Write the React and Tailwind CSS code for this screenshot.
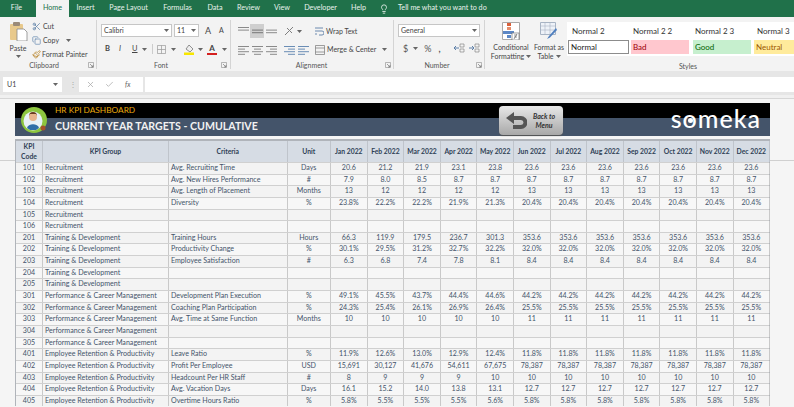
import { Check, Copy, Lightbulb, Paintbrush, Scissors, X } from "lucide-react";

const tabs = [
  ["File", "w-[33px] mr-[3px]"],
  ["Home", "w-[33px]"],
  ["Insert", "w-[33px]"],
  ["Page Layout", "w-[53px]"],
  ["Formulas", "w-[45px]"],
  ["Data", "w-[30px]"],
  ["Review", "w-[37px]"],
  ["View", "w-[30px]"],
  ["Developer", "w-[47px]"],
  ["Help", "w-[29px]"],
];

const months = ["Jan", "Feb", "Mar", "Apr", "May", "Jun", "Jul", "Aug", "Sep", "Oct", "Nov", "Dec"];

const R = "Recruitment";
const T = "Training & Development";
const P = "Performance & Career Management";
const E = "Employee Retention & Productivity";

// first six months are given, the rest of the year repeats June
const rows = [
  [101, R, "Avg. Recruiting Time", "Days", ["20.6", "21.2", "21.9", "23.1", "23.8", "23.6"]],
  [102, R, "Avg. New Hires Performance", "#", ["7.9", "8.0", "8.5", "8.7", "8.7", "8.7"]],
  [103, R, "Avg. Length of Placement", "Months", ["13", "12", "12", "12", "12", "13"]],
  [104, R, "Diversity", "%", ["23.8%", "22.2%", "22.2%", "21.9%", "21.3%", "20.4%"]],
  [105, R],
  [106, R],
  [201, T, "Training Hours", "Hours", ["66.3", "119.9", "179.5", "236.7", "301.3", "353.6"]],
  [202, T, "Productivity Change", "%", ["30.1%", "29.5%", "31.2%", "32.7%", "32.2%", "32.0%"]],
  [203, T, "Employee Satisfaction", "#", ["6.3", "6.8", "7.4", "7.8", "8.1", "8.4"]],
  [204, T],
  [205, T],
  [301, P, "Development Plan Execution", "%", ["49.1%", "45.5%", "43.7%", "44.4%", "44.6%", "44.2%"]],
  [302, P, "Coaching Plan Participation", "%", ["24.3%", "25.4%", "26.1%", "26.9%", "26.4%", "25.5%"]],
  [303, P, "Avg. Time at Same Function", "Months", ["10", "10", "10", "10", "10", "11"]],
  [304, P],
  [305, P],
  [401, E, "Leave Ratio", "%", ["11.9%", "12.6%", "13.0%", "12.9%", "12.4%", "11.8%"]],
  [402, E, "Profit Per Employee", "USD", ["15,691", "30,127", "41,676", "54,611", "67,675", "78,387"]],
  [403, E, "Headcount Per HR Staff", "#", ["8", "9", "9", "9", "10", "10"]],
  [404, E, "Avg. Vacation Days", "Days", ["16.1", "15.2", "14.0", "13.8", "13.1", "12.7"]],
  [405, E, "Overtime Hours Ratio", "%", ["5.8%", "5.5%", "5.5%", "5.5%", "5.6%", "5.8%"]],
];

const gridCols = "grid grid-cols-[27px_126px_118.5px_43.5px_repeat(12,36.6px)]";

function Caret({ className = "" }) {
  return (
    <svg width="5" height="3" viewBox="0 0 5 3" className={className}>
      <path d="M0 0h5L2.5 3z" fill="#666" />
    </svg>
  );
}

function Lines({ widths, color = "#8a8a8a", align = "left" }) {
  return (
    <svg width="11" height="10" viewBox="0 0 11 10">
      {widths.map((w, i) => (
        <rect
          key={i}
          x={align === "left" ? 0 : align === "right" ? 11 - w : (11 - w) / 2}
          y={1 + i * 2.6}
          width={w}
          height="1"
          fill={color}
        />
      ))}
    </svg>
  );
}

function Launcher() {
  return (
    <svg width="6" height="6" viewBox="0 0 6 6" className="self-center">
      <path d="M.5.5h5v5h-5z" fill="none" stroke="#999" strokeWidth=".7" />
      <path d="M2 2l3 3M3 5h2V3" fill="none" stroke="#777" strokeWidth=".7" />
    </svg>
  );
}

function GroupLabel({ children }) {
  return (
    <div className="flex h-[12px] items-center whitespace-nowrap text-[7px] text-[#555]">
      <span className="flex-1 text-center">{children}</span>
      <Launcher />
    </div>
  );
}

function Combo({ width, children }) {
  return (
    <div className={`flex h-[13px] items-center justify-between border border-[#c6c6c6] bg-white px-[2px] text-[7px] text-[#444] ${width}`}>
      <span>{children}</span>
      <Caret />
    </div>
  );
}

function Sep() {
  return <div className="mt-[3px] h-[49px] w-px bg-[#d4d4d4]" />;
}

function ClipboardGroup() {
  return (
    <div className="flex w-[96px] flex-col pr-[2px]">
      <div className="flex h-[44px] pl-[7px]">
        <div className="flex w-[22px] flex-col items-center pt-[5px]">
          <svg width="19" height="19" viewBox="0 0 19 19">
            <rect x="1" y="2" width="13" height="16" rx="1" fill="#e8c98c" />
            <rect x="4" y="0" width="7" height="4" rx="1" fill="#9a8a78" />
            <path d="M8 7h7l3 3v9H8z" fill="#fff" stroke="#888" strokeWidth=".8" />
          </svg>
          <span className="mt-[2px] text-[7px] leading-[10px] text-[#444]">Paste</span>
          <Caret className="mt-[2px]" />
        </div>
        <div className="ml-[3px] flex flex-col gap-[4px] pt-[4px] text-[7px] leading-[10px] text-[#444]">
          <div className="flex items-center gap-[2px]">
            <Scissors size={9} color="#5b7fa6" />
            <span>Cut</span>
          </div>
          <div className="flex items-center gap-[2px]">
            <Copy size={9} color="#6d8fb3" />
            <span>Copy</span>
            <Caret className="ml-[5px]" />
          </div>
          <div className="flex items-center gap-[1px]">
            <Paintbrush size={9} color="#b8862c" />
            <span className="whitespace-nowrap">Format Painter</span>
          </div>
        </div>
      </div>
      <GroupLabel>Clipboard</GroupLabel>
    </div>
  );
}

function FontGroup() {
  return (
    <div className="flex w-[133px] flex-col pl-[4px] pr-[3px]">
      <div className="h-[44px] pt-[7px]">
        <div className="flex items-center gap-[2px]">
          <Combo width="w-[71px]">Calibri</Combo>
          <Combo width="w-[25px]">11</Combo>
          <span className="ml-[4px] text-[9px] leading-none text-[#444]">A</span>
          <span className="ml-[6px] text-[7px] leading-none text-[#444]">A</span>
        </div>
        <div className="mt-[6px] flex items-center text-[7.5px] text-[#444]">
          <span className="ml-[4px] w-[14px] font-bold">B</span>
          <span className="w-[13px] italic">I</span>
          <span className="w-[10px] underline">U</span>
          <Caret />
          <div className="ml-[5px] h-[10px] w-px bg-[#ccc]" />
          <svg width="9" height="9" viewBox="0 0 10 10" className="ml-[4px]">
            <path d="M.5.5h9v9h-9zM5 .5v9M.5 5h9" fill="none" stroke="#999" strokeWidth=".8" />
          </svg>
          <Caret className="ml-[5px]" />
          <svg width="11" height="12" viewBox="0 0 11 12" className="ml-[8px]">
            <path d="M2 6l3-4 4 4-3 3z" fill="#eee" stroke="#666" strokeWidth=".7" />
            <rect x="0" y="9.5" width="10" height="2.5" fill="#f7e600" />
          </svg>
          <Caret className="ml-[3px]" />
          <div className="ml-[4px] flex w-[10px] flex-col items-center">
            <span className="text-[8px] font-bold leading-[9px] text-[#444]">A</span>
            <div className="h-[2px] w-[10px] bg-[#d42020]" />
          </div>
          <Caret className="ml-[5px]" />
        </div>
      </div>
      <GroupLabel>Font</GroupLabel>
    </div>
  );
}

function AlignmentGroup() {
  return (
    <div className="flex w-[162px] flex-col pl-[7px] pr-[2px]">
      <div className="h-[44px] pt-[7px]">
        <div className="flex h-[14px] items-center whitespace-nowrap text-[7px] text-[#444]">
          <Lines widths={[11, 11, 0]} />
          <div className="ml-[1px] flex h-[14px] w-[14px] items-center justify-center bg-[#cfcfcf]">
            <Lines widths={[0, 11, 11]} color="#777" />
          </div>
          <div className="ml-[2px]">
            <Lines widths={[0, 11, 11]} />
          </div>
          <svg width="11" height="10" viewBox="0 0 11 10" className="ml-[7px]">
            <path d="M1 9l8-8M3 2l5 5" stroke="#7f7f7f" fill="none" />
          </svg>
          <Caret className="ml-[2px]" />
          <svg width="10" height="11" viewBox="0 0 10 11" className="ml-[12px]">
            <path d="M1 2h8M1 5h7a2 2 0 0 1 0 4H5M1 8h2" stroke="#5d7fa8" strokeWidth=".9" fill="none" />
          </svg>
          <span className="ml-[2px]">Wrap Text</span>
        </div>
        <div className="mt-[5px] flex h-[13px] items-center whitespace-nowrap text-[7px] text-[#444]">
          <Lines widths={[11, 7, 11, 7]} />
          <div className="ml-[3px]">
            <Lines widths={[11, 7, 11, 7]} align="center" />
          </div>
          <div className="ml-[3px]">
            <Lines widths={[11, 7, 11, 7]} align="right" />
          </div>
          <div className="ml-[7px]">
            <Lines widths={[11, 7, 11, 7]} align="right" color="#6a8db5" />
          </div>
          <div className="ml-[3px]">
            <Lines widths={[11, 7, 11, 7]} color="#6a8db5" />
          </div>
          <svg width="10" height="10" viewBox="0 0 10 10" className="ml-[6px]">
            <path d="M.5.5h9v9h-9zM.5 3h9M.5 7h9" stroke="#777" strokeWidth=".7" fill="none" />
          </svg>
          <span className="ml-[2px]">Merge &amp; Center</span>
          <Caret className="ml-[6px]" />
        </div>
      </div>
      <GroupLabel>Alignment</GroupLabel>
    </div>
  );
}

function NumberGroup() {
  return (
    <div className="flex w-[90px] flex-col pl-[4px] pr-[2px]">
      <div className="h-[44px] pt-[7px]">
        <Combo width="w-[82px]">General</Combo>
        <div className="mt-[6px] flex items-center text-[9px] leading-none text-[#555]">
          <span className="ml-[5px]">$</span>
          <Caret className="ml-[5px]" />
          <span className="ml-[6px]">%</span>
          <span className="ml-[7px] font-bold">,</span>
          <svg width="12" height="10" viewBox="0 0 12 10" className="ml-[12px]">
            <path d="M1 5h5M1 5l2-2M1 5l2 2" stroke="#5d7fa8" fill="none" />
            <path d="M7 1h4v3H7zM7 6h4v3H7z" stroke="#888" strokeWidth=".7" fill="none" />
          </svg>
          <svg width="12" height="10" viewBox="0 0 12 10" className="ml-[3px]">
            <path d="M6 5H1M6 5L4 3M6 5L4 7" stroke="#5d7fa8" fill="none" />
            <path d="M7 1h4v3H7zM7 6h4v3H7z" stroke="#888" strokeWidth=".7" fill="none" />
          </svg>
        </div>
      </div>
      <GroupLabel>Number</GroupLabel>
    </div>
  );
}

function BigButton({ top, bottom, children, width }) {
  return (
    <div className={`flex shrink-0 flex-col items-center whitespace-nowrap pt-[5px] text-[7px] leading-[9px] text-[#444] ${width}`}>
      {children}
      <span className="mt-[3px]">{top}</span>
      <span className="flex items-center gap-[2px]">
        {bottom}
        <Caret />
      </span>
    </div>
  );
}

function StyleCell({ className, children }) {
  return <div className={`flex h-[14px] shrink-0 items-center px-[2px] text-[8px] ${className}`}>{children}</div>;
}

function StylesGroup() {
  return (
    <div className="flex min-w-0 flex-1 flex-col overflow-hidden">
      <div className="flex h-[44px]">
        <BigButton top="Conditional" bottom="Formatting" width="w-[52px]">
          <svg width="18" height="18" viewBox="0 0 18 18">
            <path d="M.5.5h17v17H.5z" fill="#fff" stroke="#aaa" />
            <rect x="5" y="1" width="4" height="3" fill="#d9603b" />
            <rect x="5" y="5" width="4" height="3" fill="#e58d6c" />
            <rect x="1" y="9" width="11" height="3" fill="#5c87c5" />
            <rect x="5" y="13" width="4" height="3" fill="#5c87c5" />
            <rect x="10" y="11" width="7" height="7" fill="#fff" stroke="#777" strokeWidth=".7" />
            <path d="M12 13h3M12 15h3M15 12l-3 5" stroke="#555" strokeWidth=".6" />
          </svg>
        </BigButton>
        <BigButton top="Format as" bottom="Table" width="w-[24px]">
          <svg width="18" height="18" viewBox="0 0 18 18">
            <path d="M.5.5h15v12H.5z" fill="#eef2f8" stroke="#a8b4c4" />
            <path d="M.5 4h15M.5 8h15M5 .5v12M10 .5v12" stroke="#a8b4c4" strokeWidth=".6" />
            <path d="M16 6l-7 8-2 3 3-1.5L17 8z" fill="#4f7fbf" />
          </svg>
        </BigButton>
        <div className="ml-[6px] mt-[5px] flex h-[34px] min-w-0 flex-1 flex-col overflow-hidden bg-white">
          <div className="flex h-[18px] items-center whitespace-nowrap text-[8px] text-[#333]">
            <span className="w-[61px] shrink-0 pl-[5px]">Normal 2</span>
            <span className="w-[62px] shrink-0 pl-[5px]">Normal 2 2</span>
            <span className="w-[62px] shrink-0 pl-[5px]">Normal 2 3</span>
            <span className="shrink-0 pl-[5px]">Normal 3</span>
          </div>
          <div className="flex pl-[1px]">
            <StyleCell className="w-[61px] border border-[#8c8c8c] text-[#222]">Normal</StyleCell>
            <StyleCell className="ml-[2px] w-[58px] bg-[#ffc7ce] text-[#9c0006]">Bad</StyleCell>
            <StyleCell className="ml-[4px] w-[58px] bg-[#c6efce] text-[#006100]">Good</StyleCell>
            <StyleCell className="ml-[3px] w-[60px] bg-[#ffeb9c] text-[#9c5700]">Neutral</StyleCell>
          </div>
        </div>
      </div>
      <div className="flex h-[10px] items-center pl-[191px] text-[7px] text-[#555]">
        <span className="w-[24px] text-center">Styles</span>
      </div>
    </div>
  );
}

function TitleBanner() {
  return (
    <div className="relative h-[33px] w-[755px]">
      <div className="flex h-[15px] items-center bg-black pl-[40px] text-[8.3px] text-[#e9a90c]">HR KPI DASHBOARD</div>
      <div className="flex h-[18px] items-center bg-[#44546a] pl-[40px] text-[10.6px] font-bold text-[#f2f2f2]">
        CURRENT YEAR TARGETS - CUMULATIVE
      </div>
      <svg width="26" height="26" viewBox="0 0 26 26" className="absolute left-[6px] top-[4px]">
        <circle cx="13" cy="13" r="13" fill="#8dc63f" />
        <circle cx="12" cy="14" r="9.5" fill="#e7f1f6" />
        <circle cx="12" cy="10" r="4" fill="#e8b48c" />
        <path d="M8 9a4 4 0 0 1 8 0l-1-2H9z" fill="#6b3c20" />
        <path d="M6 21c1-5 11-5 12 0l-3 2H9z" fill="#2f6fa8" />
        <circle cx="22" cy="21" r="2.5" fill="#a6522a" />
      </svg>
      <div className="absolute left-[484px] top-[3px] flex h-[29px] w-[64px] items-center rounded-[4px] bg-gradient-to-b from-[#e8e8e8] to-[#a8a8a8] shadow-[0_1px_1px_#555]">
        <svg width="22" height="20" viewBox="0 0 22 20" className="ml-[6px]">
          <path d="M9 1L1 7l8 6V9h7a2.5 2.5 0 0 1 0 5H8v4h8a6.5 6.5 0 0 0 0-13H9z" fill="#555" />
        </svg>
        <span className="ml-[1px] mr-[3px] flex-1 text-center text-[7px] font-bold italic leading-[9px] text-[#333]">
          Back to
          <br />
          Menu
        </span>
      </div>
      <span className="absolute right-[9px] top-0 flex items-center text-[25px] font-medium leading-[30px] tracking-[1px] text-white">
        s
        <span className="relative">
          o
          <span className="absolute left-[5px] top-[15px] h-[5px] w-[5px] rounded-full bg-white" />
        </span>
        meka
      </span>
    </div>
  );
}

function KpiTable() {
  return (
    <div className="mt-[3px] w-[755px] border-x border-t-2 border-[#b0b4ba]">
      <div className={`${gridCols} h-[21px] whitespace-nowrap bg-[#d6dce4] text-[6.8px] font-bold leading-[9.5px] text-[#2f3f55]`}>
        <div className="flex items-center justify-center border-r border-[#bfc4cb] text-center">
          <span>
            KPI
            <br />
            Code
          </span>
        </div>
        <div className="flex items-center justify-center border-r border-[#bfc4cb]">KPI Group</div>
        <div className="flex items-center justify-center border-r border-[#bfc4cb]">Criteria</div>
        <div className="flex items-center justify-center border-r border-[#bfc4cb]">Unit</div>
        {months.map((m) => (
          <div key={m} className="flex items-center justify-center border-r border-[#bfc4cb]">
            {m} 2022
          </div>
        ))}
      </div>
      {rows.map(([code, group, criteria, unit, values], i) => (
        <div
          key={code}
          className={`${gridCols} h-[11.65px] whitespace-nowrap border-t border-[#d0d0d0] text-[7.1px] leading-[10px] text-[#44546a] ${i % 2 ? "bg-[#f7f7f7]" : "bg-[#f3f3f3]"}`}
        >
          <div className="border-r border-[#c9c9c9] text-center">{code}</div>
          <div className="border-r border-[#c9c9c9] pl-[2px]">{group}</div>
          <div className="border-r border-[#c9c9c9] pl-[2px]">{criteria}</div>
          <div className="border-r border-[#c9c9c9] text-center">{unit}</div>
          {months.map((m, j) => (
            <div key={m} className="border-r border-[#c9c9c9] text-center">
              {values ? values[Math.min(j, 5)] : ""}
            </div>
          ))}
        </div>
      ))}
    </div>
  );
}

export default function App() {
  return (
    <div className="flex h-[407px] w-[794px] flex-col overflow-hidden bg-[#f5f5f5] font-['Lato',sans-serif]">
      <div className="flex h-[17px] shrink-0 bg-[#20714a] text-[7.2px] text-[#e9f2ec]">
        {tabs.map(([name, width]) => (
          <div
            key={name}
            className={`flex items-center justify-center whitespace-nowrap ${width} ${name === "Home" ? "bg-[#f3f3f3] text-[#20714a]" : ""}`}
          >
            {name}
          </div>
        ))}
        <Lightbulb size={10} className="ml-[6px] self-center" />
        <span className="ml-[9px] self-center">Tell me what you want to do</span>
      </div>

      <div className="flex h-[54px] shrink-0 bg-[#f3f3f3]">
        <ClipboardGroup />
        <Sep />
        <FontGroup />
        <Sep />
        <AlignmentGroup />
        <Sep />
        <NumberGroup />
        <Sep />
        <StylesGroup />
      </div>

      <div className="flex h-[24px] shrink-0 items-start bg-[#e6e6e6] pt-[6px]">
        <div className="ml-[3px] flex h-[15px] w-[59px] items-center justify-between bg-white px-[4px] text-[7px] text-[#444]">
          U1
          <Caret />
        </div>
        <span className="ml-[6px] mt-[1px] w-[9px] text-center text-[8px] leading-[12px] text-[#aaa]">⋮</span>
        <div className="ml-[2px] flex h-[15px] w-[64px] items-center bg-white pl-[7px] text-[#aaa]">
          <X size={9} />
          <Check size={9} className="ml-[10px]" />
          <span className="ml-[11px] text-[7px] italic text-[#666]">fx</span>
        </div>
        <div className="ml-[2px] h-[15px] flex-1 bg-white" />
      </div>

      <div className="h-[4px] shrink-0 border-b border-[#d6d6d6] bg-[#f0f0f0]" />

      <div className="flex flex-1 pt-[4px]">
        <div className="h-[58px] w-[15px] shrink-0 border-b border-[#d0d0d0]" />
        <div>
          <TitleBanner />
          <KpiTable />
        </div>
        <div className="h-[58px] flex-1 border-b border-[#d0d0d0]" />
      </div>
    </div>
  );
}
